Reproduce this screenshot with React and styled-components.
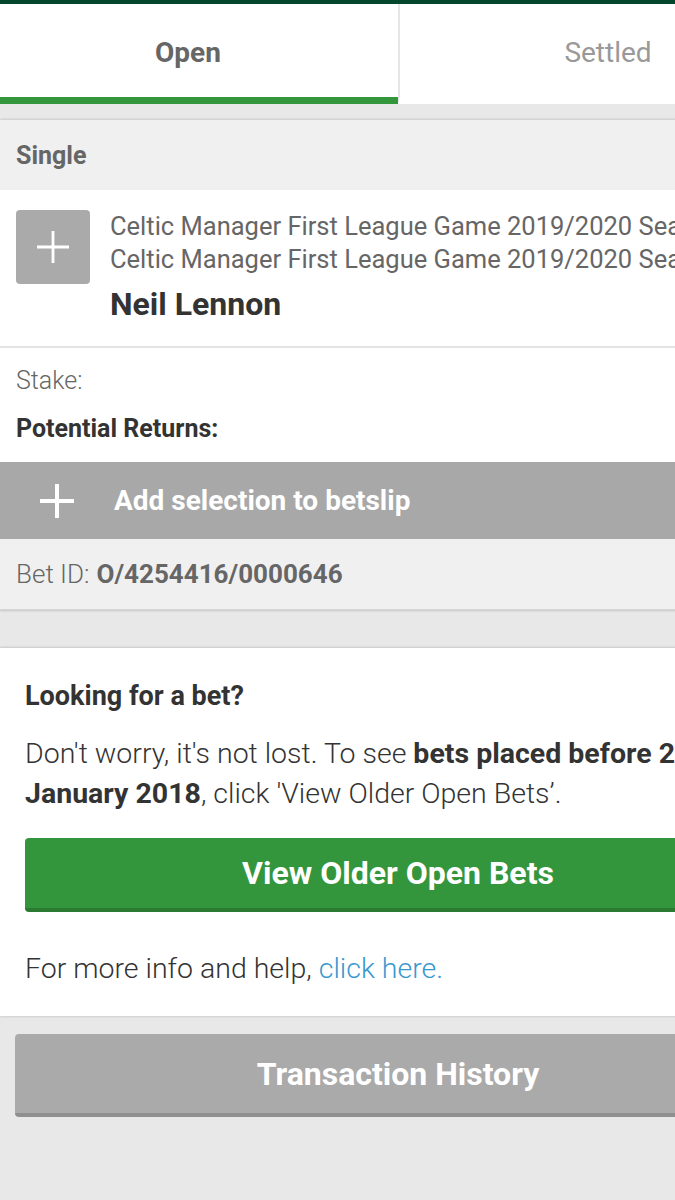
import React from 'react'
import styled, { createGlobalStyle } from 'styled-components'

const GlobalStyle = createGlobalStyle`
  html, body {
    margin: 0;
    padding: 0;
    background: #e8e8e8;
    overflow: hidden;
  }
  body {
    font-family: Roboto, 'Noto Sans', 'Liberation Sans', sans-serif;
  }
`

const Page = styled.div`
  width: 796px;
  min-height: 1200px;
  background: #e8e8e8;
`

const TopBar = styled.div`
  height: 4px;
  background: #03472e;
`

const Tabs = styled.nav`
  display: grid;
  grid-template-columns: 1fr 1fr;
  height: 100px;
  background: #fff;
`

const Tab = styled.div`
  display: flex;
  align-items: center;
  justify-content: center;
  padding-top: 4px;
  font-size: 28px;
  font-weight: ${p => (p.$active ? 700 : 400)};
  color: ${p => (p.$active ? '#666' : '#999')};
  border-bottom: 7px solid ${p => (p.$active ? '#33963d' : 'transparent')};
  border-left: ${p => (p.$active ? 'none' : '2px solid #e6e6e6')};
  padding-left: ${p => p.$shiftLeft || 0}px;
  padding-right: ${p => p.$shiftRight || 0}px;
`

const Bet = styled.section`
  margin-top: 16px;
  background: #fff;
  box-shadow: 0 -1px 2px rgba(0, 0, 0, 0.12), 0 1px 2px rgba(0, 0, 0, 0.15);
`

const BetType = styled.header`
  height: 70px;
  display: flex;
  align-items: center;
  padding: 0 16px;
  background: #f0f0f0;
  font-size: 25px;
  font-weight: 700;
  color: #666;
`

const Selection = styled.div`
  display: flex;
  padding: 20px 16px 22px;
  border-bottom: 2px solid #e4e4e4;
`

const PlusBox = styled.div`
  flex: none;
  width: 74px;
  height: 74px;
  border-radius: 4px;
  background: #aaa;
  display: flex;
  align-items: center;
  justify-content: center;
`

const SelectionText = styled.div`
  min-width: 0;
  flex: 1;
  margin-left: 20px;
`

const Market = styled.div`
  font-size: 25.5px;
  line-height: 33px;
  color: #666;
  white-space: nowrap;
  overflow: hidden;
  text-overflow: ellipsis;
`

const Name = styled.div`
  margin-top: 8px;
  font-size: 32px;
  line-height: 40px;
  font-weight: 700;
  color: #333;
`

const Stakes = styled.div`
  padding: 9px 16px;
`

const StakeLine = styled.div`
  font-size: 25px;
  line-height: 48px;
  font-weight: ${p => (p.$bold ? 700 : 300)};
  color: ${p => (p.$bold ? '#333' : '#666')};
`

const AddBar = styled.div`
  height: 77px;
  display: flex;
  align-items: center;
  background: #a8a8a8;
  padding-left: 40px;
  gap: 40px;
  font-size: 28px;
  font-weight: 700;
  color: #fff;
`

const BetIdRow = styled.div`
  height: 70px;
  display: flex;
  align-items: center;
  padding: 0 16px;
  background: #f0f0f0;
  font-size: 26px;
  font-weight: 300;
  color: #666;
  border-bottom: 1px solid #d6d6d6;

  b {
    font-weight: 700;
    margin-left: 7px;
  }
`

const Card = styled.section`
  margin-top: 38px;
  background: #fff;
  padding: 29px 25px 27px;
  box-shadow: 0 -1px 2px rgba(0, 0, 0, 0.14), 0 1px 2px rgba(0, 0, 0, 0.1);
`

const CardTitle = styled.h3`
  margin: 0;
  font-size: 27px;
  line-height: 38px;
  font-weight: 700;
  color: #333;
`

const Para = styled.p`
  margin: ${p => p.$margin};
  font-size: 28.5px;
  line-height: 40px;
  font-weight: 300;
  color: #333;

  b {
    font-weight: 700;
  }
`

const Link = styled.a`
  color: #3a98d0;
  text-decoration: none;
`

const Button = styled.button`
  display: block;
  width: 100%;
  height: ${p => p.$height}px;
  margin-top: ${p => p.$top}px;
  border: none;
  border-radius: 4px;
  border-bottom: 4px solid ${p => p.$shade};
  background: ${p => p.$bg};
  color: #fff;
  font-family: inherit;
  font-size: ${p => p.$size}px;
  font-weight: 700;
  padding: 0;
`

const Footer = styled.div`
  padding: 18px 15px;
`

const Plus = ({ size, stroke }) => (
  <svg width={size} height={size} viewBox="0 0 34 34">
    <path d="M17 0v34M0 17h34" stroke="#fff" strokeWidth={stroke} fill="none" />
  </svg>
)

export default function App() {
  return (
    <Page>
      <GlobalStyle />
      <TopBar />
      <Tabs>
        <Tab $active $shiftRight={22}>Open</Tab>
        <Tab $shiftLeft={20}>Settled</Tab>
      </Tabs>

      <Bet>
        <BetType>Single</BetType>
        <Selection>
          <PlusBox>
            <Plus size={32} stroke={3} />
          </PlusBox>
          <SelectionText>
            <Market>Celtic Manager First League Game 2019/2020 Season</Market>
            <Market>Celtic Manager First League Game 2019/2020 Season</Market>
            <Name>Neil Lennon</Name>
          </SelectionText>
        </Selection>
        <Stakes>
          <StakeLine>Stake:</StakeLine>
          <StakeLine $bold>Potential Returns:</StakeLine>
        </Stakes>
        <AddBar>
          <Plus size={34} stroke={4} />
          Add selection to betslip
        </AddBar>
        <BetIdRow>
          Bet ID:<b>O/4254416/0000646</b>
        </BetIdRow>
      </Bet>

      <Card>
        <CardTitle>Looking for a bet?</CardTitle>
        <Para $margin="19px 0 0">
          Don't worry, it's not lost. To see <b>bets placed before 23rd</b>
          <br />
          <b>January 2018</b>, click 'View Older Open Bets’.
        </Para>
        <Button $top={24} $height={74} $bg="#33963d" $shade="#2a7a32" $size={32}>
          View Older Open Bets
        </Button>
        <Para $margin="37px 0 0">
          For more info and help, <Link href="#">click here.</Link>
        </Para>
      </Card>

      <Footer>
        <Button $top={0} $height={83} $bg="#aaa" $shade="#8f8f8f" $size={32}>
          Transaction History
        </Button>
      </Footer>
    </Page>
  )
}
